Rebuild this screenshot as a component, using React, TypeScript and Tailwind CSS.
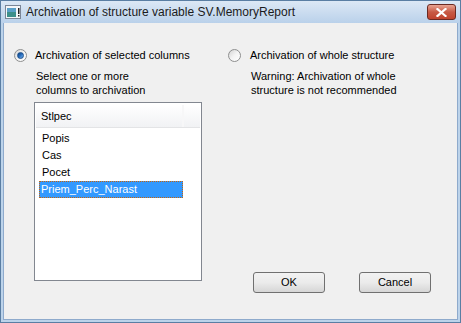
import React, { useState } from "react";

const font = { fontFamily: '"Liberation Sans", Arial, sans-serif' };

const Radio = ({ checked }: { checked: boolean }) => (
	<div className="w-[13px] h-[13px] rounded-full border border-[#8e8f8f] bg-gradient-to-br from-[#d4d4d4] via-[#f4f4f4] to-[#ffffff] flex items-center justify-center shrink-0">
		{checked && (
			<div className="w-[7px] h-[7px] rounded-full bg-gradient-to-br from-[#0a3f7a] via-[#2a6fc0] to-[#7ab8f0] border border-[#1c4f8c]" />
		)}
	</div>
);

const WinButton = ({ label }: { label: string }) => (
	<button className="w-[72px] h-[21px] rounded-[3px] border border-[#707070] bg-gradient-to-b from-[#f2f2f2] via-[#ebebeb] to-[#d6d6d6] text-[11px] text-black leading-none">
		{label}
	</button>
);

export default function App() {
	const [columns] = useState<string[]>(["Popis", "Cas", "Pocet", "Priem_Perc_Narast"]);
	const [selected] = useState<string>("Priem_Perc_Narast");

	return (
		<div
			style={font}
			className="w-[461px] h-[323px] flex flex-col border border-[#5a7ea3] bg-[#bcd3ea] overflow-hidden"
		>
			{/*Title bar*/}
			<div className="h-[22px] flex items-center bg-gradient-to-b from-[#dce8f5] to-[#bad1ea] shrink-0">
				<svg width="16" height="14" viewBox="0 0 16 14" className="ml-[4px]">
					<rect x="0.5" y="0.5" width="15" height="13" fill="#f4f6f8" stroke="#7a8596" />
					<rect x="2" y="3" width="9" height="9" fill="#3d8f8a" />
					<rect x="2" y="3" width="9" height="4" fill="#5aa0c8" />
					<rect x="13" y="3" width="1.5" height="6" fill="#222" />
					<rect x="13" y="10" width="1.5" height="1.5" fill="#222" />
				</svg>
				<span className="ml-[5px] text-[12px] text-[#1b1b1b]">
					Archivation of structure variable SV.MemoryReport
				</span>
				<div className="ml-auto mr-[4px] w-[29px] h-[16px] rounded-[3px] border border-[#6b2a22] bg-gradient-to-b from-[#e8a493] via-[#c75a45] to-[#c0432d] flex items-center justify-center">
					<svg width="11" height="9" viewBox="0 0 11 9">
						<path d="M1.5 1 L9.5 8 M9.5 1 L1.5 8" stroke="#fff" strokeWidth="2.2" strokeLinecap="square" />
					</svg>
				</div>
			</div>

			{/*Content*/}
			<div className="flex-1 flex mx-[2px] mb-[2px] bg-[#f0f0f0] border-l border-b border-r border-[#8eaacc] pl-[10px] pt-[26px] text-[11px] text-black">
				<div className="w-[214px] flex flex-col">
					<div className="flex items-center gap-[8px] h-[13px]">
						<Radio checked />
						<span className="leading-[13px]">Archivation of selected columns</span>
					</div>
					<div className="ml-[22px] mt-[7px] leading-[14px]">
						Select one or more
						<br />
						columns to archivation
					</div>
					<div className="ml-[20px] mt-[5px] w-[168px] h-[179px] border border-[#828790] bg-white flex flex-col">
						<div className="mx-[1px] mt-[2px] h-[23px] flex border-b border-[#e3e4e6] bg-gradient-to-b from-[#ffffff] to-[#f1f2f4]">
							<div className="w-[148px] flex items-center pl-[5px] border-r-2 border-[#f7f7f8]">
								Stlpec
							</div>
							<div className="flex-1" />
						</div>
						<div className="mt-[2px] flex flex-col">
							{columns.map((col) => (
								<div key={col} className="h-[17px] flex items-center pl-[5px]">
									<span
										className={
											col === selected
												? "w-[144px] h-[17px] -ml-[1px] pl-[2px] flex items-center bg-[#3399ff] text-white outline outline-1 outline-dotted outline-[#c8640a] -outline-offset-1"
												: "h-[17px] flex items-center pl-[2px]"
										}
									>
										{col}
									</span>
								</div>
							))}
						</div>
					</div>
				</div>

				<div className="flex-1 flex flex-col">
					<div className="flex items-center gap-[9px] h-[13px]">
						<Radio checked={false} />
						<span className="leading-[13px]">Archivation of whole structure</span>
					</div>
					<div className="ml-[23px] mt-[7px] leading-[14px]">
						Warning: Archivation of whole
						<br />
						structure is not recommended
					</div>
					<div className="mt-auto mb-[26px] ml-[25px] flex gap-[34px]">
						<WinButton label="OK" />
						<WinButton label="Cancel" />
					</div>
				</div>
			</div>
		</div>
	);
}
